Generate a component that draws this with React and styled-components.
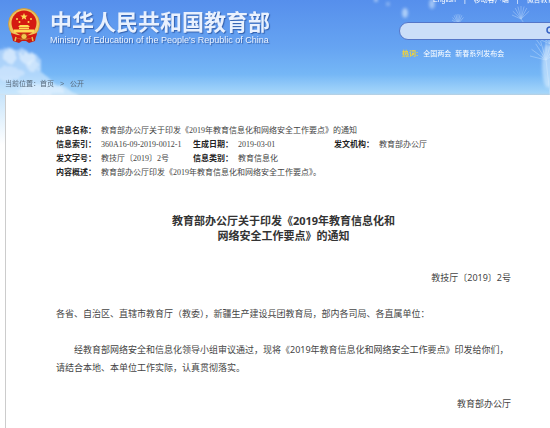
import React from 'react'
import styled, { createGlobalStyle } from 'styled-components'

const meta = [
    [{ label: '信息名称：', value: '教育部办公厅关于印发《2019年教育信息化和网络安全工作要点》的通知', wide: true }],
    [
        { label: '信息索引：', value: '360A16-09-2019-0012-1' },
        { label: '生成日期：', value: '2019-03-01' },
        { label: '发文机构：', value: '教育部办公厅' },
    ],
    [
        { label: '发文字号：', value: '教技厅〔2019〕2号' },
        { label: '信息类别：', value: '教育信息化' },
    ],
    [{ label: '内容概述：', value: '教育部办公厅印发《2019年教育信息化和网络安全工作要点》。', wide: true }],
]

// dandelion seeds: x, y, radius
const seeds = [[458, 20, 6], [521, 15, 9], [546, 56, 16], [550, 40, 9]]

const rays = [180, 205, 230, 250, 270, 290, 310, 335]

const Sky = () => (
    <SkyArt viewBox="0 0 550 95" preserveAspectRatio="xMinYMin slice" aria-hidden="true">
        <defs>
            <filter id="soft" x="-20%" y="-20%" width="140%" height="140%">
                <feGaussianBlur stdDeviation="1.500" />
            </filter>
            <filter id="cloud" x="-20%" y="-20%" width="140%" height="140%">
                <feTurbulence type="fractalNoise" baseFrequency=".12" numOctaves="3" seed="4" result="noise" />
                <feDisplacementMap in="SourceGraphic" in2="noise" scale="10" />
                <feGaussianBlur stdDeviation="1" />
            </filter>
        </defs>
        <g fill="#eaf5ff" filter="url(#cloud)">
            <path d="M-8 52 Q6 46 14 51 Q26 46 35 53 Q42 60 40 71 Q48 77 54 83 Q68 88 84 100 L-8 102Z" opacity=".5" />
            <circle cx="10" cy="56" r="7" opacity=".6" />
            <circle cx="28" cy="58" r="7" opacity=".6" />
            <circle cx="33" cy="66" r="6" opacity=".5" />
            <ellipse cx="10" cy="74" rx="14" ry="8" opacity=".4" />
            <ellipse cx="40" cy="90" rx="24" ry="6" opacity=".5" />
        </g>
        <g stroke="#e4f3ff" strokeWidth=".6" opacity=".55">
            {seeds.map(([x, y, r]) => rays.map((a) => (
                <line
                    key={`${x}-${a}`}
                    x1={x}
                    y1={y + 4}
                    x2={x + r * Math.cos(a * Math.PI / 180)}
                    y2={y + r * Math.sin(a * Math.PI / 180)}
                />
            )))}
            <path d="M521 19 L541 46 M546 60 L550 95" fill="none" />
        </g>
        <g fill="#e4f3ff" filter="url(#soft)">
            <ellipse cx="405" cy="13" rx="3" ry="5" opacity=".6" />
            <ellipse cx="432" cy="4" rx="3" ry="5" opacity=".5" />
            <circle cx="376" cy="0" r="2" opacity=".6" />
            <circle cx="388" cy="4" r="2" opacity=".4" />
            <ellipse cx="548" cy="66" rx="6" ry="22" opacity=".55" />
        </g>
    </SkyArt>
)

const Emblem = () => (
    <EmblemArt viewBox="0 0 32 36" role="img" aria-label="国徽">
        <path d="M3 23 L5 33 L11 35 L14 33 H18 L21 35 L27 33 L29 23Z" fill="#c71a10" />
        <ellipse cx="16" cy="16" rx="15.500" ry="15.500" fill="#f0c35a" stroke="#cf9433" strokeWidth=".8" />
        <circle cx="16" cy="15" r="12.500" fill="#d51a12" />
        <path d="M16 5 l1 2.400 2.600 .1 -2 1.700 .7 2.500 -2.300 -1.400 -2.300 1.400 .7 -2.500 -2 -1.700 2.600 -.1Z" fill="#ffdc56" />
        <g fill="#ffdc56">
            <circle cx="9" cy="11" r="1" />
            <circle cx="11.500" cy="14" r="1" />
            <circle cx="20.500" cy="14" r="1" />
            <circle cx="23" cy="11" r="1" />
            <path d="M12 17 H20 L22 19 H10Z M11 19.500 H21 V21 H11Z M6 21.500 H26 V24.500 H6Z" />
        </g>
        <path d="M3 25 Q16 30 29 25 L28 29 Q16 33 4 29Z" fill="#d51a12" />
        <circle cx="16" cy="28.500" r="3" fill="#f3c750" stroke="#a9440f" strokeWidth=".8" />
        <path d="M8 29 L7 33 M24 29 L25 33" stroke="#edbd50" strokeWidth="1.500" />
    </EmblemArt>
)

const App = () => (
    <>
        <GlobalStyle />
        <Page>
            <Header>
                <Sky />
                <Banner>
                    <Brand href="#">
                        <Emblem />
                        <BrandText>
                            <BrandName>中华人民共和国教育部</BrandName>
                            <BrandEnglish>Ministry of Education of the People's Republic of China</BrandEnglish>
                        </BrandText>
                    </Brand>
                    <Tools>
                        <TopLinks>
                            <a href="#">English</a>
                            <span>|</span>
                            <a href="#">移动客户端</a>
                            <span>|</span>
                            <a href="#">微言教育</a>
                        </TopLinks>
                        <SearchBox>
                            <input type="text" aria-label="搜索" />
                            <button type="button" aria-label="搜索">
                                <svg viewBox="0 0 10 10" width="10" height="10">
                                    <circle cx="4" cy="4" r="3" fill="none" stroke="#3763c4" strokeWidth="1.500" />
                                    <path d="M6 6 L9 9" stroke="#3763c4" strokeWidth="1.500" />
                                </svg>
                            </button>
                        </SearchBox>
                        <HotWords>
                            <strong>热词:</strong>
                            <a href="#">全国两会</a>
                            <a href="#">新春系列发布会</a>
                        </HotWords>
                    </Tools>
                </Banner>
                <Crumbs aria-label="当前位置">
                    <span>当前位置：</span>
                    <a href="#">首页</a>
                    <Arrow>&gt;</Arrow>
                    <a href="#">公开</a>
                </Crumbs>
            </Header>
            <Sheet>
                <Meta>
                    {meta.map((row) => (
                        <MetaRow key={row[0].label}>
                            {row.map((item) => (
                                <MetaItem key={item.label} $wide={item.wide}>
                                    <dt>{item.label}</dt>
                                    <dd>{item.value}</dd>
                                </MetaItem>
                            ))}
                        </MetaRow>
                    ))}
                </Meta>
                <Title>教育部办公厅关于印发《2019年教育信息化和<br />网络安全工作要点》的通知</Title>
                <Article>
                    <Line $right>教技厅〔2019〕2号</Line>
                    <Line>各省、自治区、直辖市教育厅（教委），新疆生产建设兵团教育局，部内各司局、各直属单位：</Line>
                    <Line $indent>经教育部网络安全和信息化领导小组审议通过，现将《2019年教育信息化和网络安全工作要点》印发给你们，请结合本地、本单位工作实际，认真贯彻落实。</Line>
                    <Line $right>教育部办公厅</Line>
                </Article>
            </Sheet>
        </Page>
    </>
)

export default App

const GlobalStyle = createGlobalStyle`
    body {
        margin: 0;
        background: #fff;
        overflow: hidden;
    }
    a {
        color: inherit;
        text-decoration: none;
    }
`

const Page = styled.div`
    min-height: 100vh;
    display: flex;
    flex-direction: column;
    overflow: hidden;
    background: linear-gradient(#c9e5fb 95px, #fff 145px);
    font-family: "Noto Sans", "Noto Sans CJK SC", sans-serif;
`

const Header = styled.header`
    position: relative;
    background: linear-gradient(#568fec 0%, #66a4f2 50%, #75b7f6 78%, #a5d6fa 98%, #b9cfdf 100%);
`

const SkyArt = styled.svg`
    position: absolute;
    inset: 0;
    width: 100%;
    height: 100%;
`

const Banner = styled.div`
    position: relative;
    display: flex;
    justify-content: space-between;
    height: 76px;
`

const Brand = styled.a`
    display: flex;
    align-items: flex-start;
    gap: 10px;
    padding: 8px 0 0 8px;
`

const EmblemArt = styled.svg`
    width: 32px;
    height: 36px;
`

const BrandText = styled.div`
    display: flex;
    flex-direction: column;
    white-space: nowrap;
    color: #e9f1fe;
    text-shadow: 1px 1px 1px #3460ac;
`

const BrandName = styled.span`
    font: bold 22px/24px "Noto Sans CJK SC", sans-serif;
`

const BrandEnglish = styled.span`
    padding-top: 2px;
    font: 9px/12px "Liberation Sans", sans-serif;
`

const Tools = styled.div`
    width: 151px;
    display: flex;
    flex-direction: column;
    white-space: nowrap;
    color: #fff;
    font: 7px/12px "Liberation Sans", "Noto Sans CJK SC", sans-serif;
`

const TopLinks = styled.nav`
    display: flex;
    gap: 8px;
    height: 22px;
    padding-left: 34px;
    line-height: 0;
`

const SearchBox = styled.form`
    display: flex;
    align-items: center;
    box-sizing: border-box;
    width: 172px;
    height: 18px;
    border: 1px solid #5476c8;
    border-radius: 9px;
    background: #cbdef8;
    input {
        width: 146px;
        box-sizing: border-box;
        padding: 0 8px;
        border: 0;
        outline: 0;
        background: none;
        font-size: 9px;
    }
    button {
        display: flex;
        padding: 0;
        border: 0;
        background: none;
    }
`

const HotWords = styled.div`
    display: flex;
    gap: 4px;
    padding: 8px 0 0 3px;
    strong {
        padding-right: 1px;
        color: #f5d435;
        font-weight: bold;
    }
`

const Crumbs = styled.nav`
    position: relative;
    display: flex;
    height: 19px;
    padding-left: 5px;
    color: #56687a;
    font: 7px/15px "Liberation Sans", "Noto Sans CJK SC", sans-serif;
`

const Arrow = styled.span`
    padding: 0 6px;
`

const Sheet = styled.main`
    flex: 1;
    margin-left: 5px;
    padding: 29px 39px 0 50px;
    border-left: 1px solid #ccc;
    background: #fff;
    color: #444;
`

const Meta = styled.dl`
    margin: 0;
    font: 8px/14px "Liberation Serif", "Noto Sans CJK SC", serif;
`

const MetaRow = styled.div`
    display: grid;
    grid-template-columns: 137px 141px 1fr;
`

const MetaItem = styled.div`
    display: flex;
    gap: 5px;
    white-space: nowrap;
    grid-column: ${({ $wide }) => $wide ? '1 / -1' : 'auto'};
    dt {
        color: #222;
        font-weight: bold;
    }
    dd {
        margin: 0;
    }
`

const Title = styled.h1`
    margin: 33px 0 26px;
    color: #333;
    font-size: 11px;
    line-height: 15px;
    text-align: center;
`

const Article = styled.article`
    font-size: 9px;
    line-height: 18px;
`

const Line = styled.p`
    margin: 0 0 18px;
    text-align: ${({ $right }) => $right ? 'right' : 'left'};
    text-indent: ${({ $indent }) => $indent ? '2em' : '0'};
`
